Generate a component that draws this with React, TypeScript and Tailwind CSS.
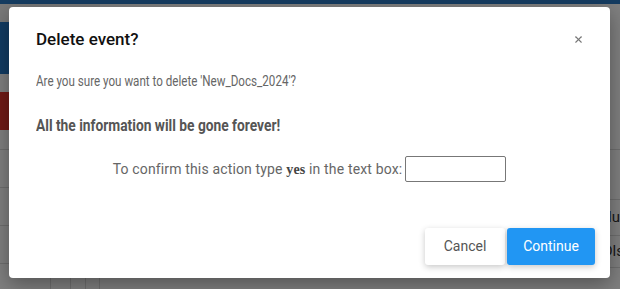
import { X } from 'lucide-react';

const font = { fontFamily: 'Roboto, "Liberation Sans", sans-serif' };

function BackgroundPage() {
    return (
        <div className="flex h-full w-full flex-col bg-white">
            <div className="h-[4px] bg-[#2a78c2]" />
            <div className="flex flex-1">
                <div className="flex w-[100px] flex-col">
                    <div className="h-[18px] bg-[#f2f2f2]" />
                    <div className="h-[52px] bg-[#2477c4]" />
                    <div className="h-[18px] bg-white" />
                    <div className="h-[38px] bg-[#e0342c]" />
                    <div className="h-[20px] border-b border-[#ddd]" />
                    <div className="h-[38px] border-b border-[#ddd]" />
                    <div className="h-[38px] border-b border-[#ddd]" />
                    <div className="h-[38px] border-b border-[#ddd]" />
                    <div className="flex flex-1">
                        <div className="w-[50px]" />
                        <div className="w-[20px] border-l border-[#ddd]" />
                        <div className="w-[15px] border-l border-[#ddd]" />
                        <div className="w-[15px] border-l border-r border-[#ddd]" />
                    </div>
                </div>
                <div className="flex flex-1 flex-col" style={font}>
                    <div className="h-[146px] border-b border-[#ddd]" />
                    <div className="h-[50px] border-b border-[#ddd]" />
                    <div className="flex h-[36px] items-center justify-end border-b border-[#ddd] text-[15px] text-[#333]">
                        <span className="-mr-[8px]">Value</span>
                    </div>
                    <div className="flex h-[32px] items-center justify-end border-b border-[#ddd] text-[15px] text-[#333]">
                        <span className="-mr-[4px]">Dls</span>
                    </div>
                </div>
            </div>
        </div>
    );
}

function DeleteDialog() {
    return (
        <div
            className="absolute left-[9px] top-[7px] flex h-[271px] w-[601px] flex-col rounded-[4px] bg-white shadow-[0_6px_20px_rgba(0,0,0,0.35)]"
            style={font}
        >
            <div className="flex items-center justify-between pl-[27px] pr-[26px] pt-[22px]">
                <h2 className="text-[17px] font-medium leading-[20px] text-[#111]">Delete event?</h2>
                <X className="h-[11px] w-[11px] text-[#777]" strokeWidth={2.4} />
            </div>
            <div className="mt-[23px] pl-[27px]">
                <p className="origin-left scale-x-[0.83] whitespace-nowrap text-[14px] leading-[18px] text-[#666]">
                    Are you sure you want to delete 'New_Docs_2024'?
                </p>
            </div>
            <div className="mt-[25px] pl-[27px]">
                <p className="origin-left scale-x-[0.81] whitespace-nowrap text-[17px] font-bold leading-[20px] text-[#555]">
                    All the information will be gone forever!
                </p>
            </div>
            <div className="mt-[21px] flex items-center justify-center text-[14px] text-[#666]">
                <span className="tracking-[0.15px]">
                    To confirm this action type{' '}
                    <b className="font-bold text-[#444]" style={{ fontFamily: '"Liberation Serif", serif' }}>
                        yes
                    </b>{' '}
                    in the text box:
                </span>
                <input
                    type="text"
                    className="ml-[3px] h-[26px] w-[101px] rounded-[2px] border border-[#777] bg-white outline-none"
                />
            </div>
            <div className="mt-auto flex justify-end gap-[2px] pb-[13px] pr-[15px]">
                <button className="h-[37px] w-[80px] rounded-[3px] bg-white text-[14px] text-[#555] shadow-[0_2px_6px_rgba(0,0,0,0.22)]">
                    Cancel
                </button>
                <button className="h-[37px] w-[88px] rounded-[3px] bg-[#2196f3] text-[14px] text-white shadow-[0_2px_6px_rgba(0,0,0,0.22)]">
                    Continue
                </button>
            </div>
        </div>
    );
}

export default function App() {
    return (
        <div className="relative h-[289px] w-[620px] overflow-hidden">
            <BackgroundPage />
            <div className="absolute inset-0 bg-black/50" />
            <DeleteDialog />
        </div>
    );
}
